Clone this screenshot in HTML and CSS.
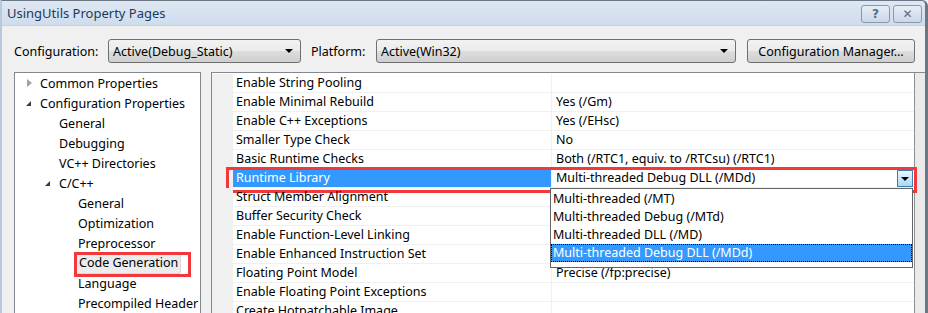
FILE: index.html
```html
<!DOCTYPE html>
<html lang="en">
<head>
  <meta charset="UTF-8" />
  <title>UsingUtils Property Pages</title>
  <link rel="stylesheet" href="styles.css">
</head>
<body>

  <div class="window">
    <div class="titlebar">
      <span class="title">UsingUtils Property Pages</span>
      <div class="caption-buttons">
        <button class="cap-btn">?</button>
        <button class="cap-btn">✕</button>
      </div>
    </div>

    <div class="toolbar">
      <label class="label label-config">Configuration:</label>
      <div class="combo combo-config">
        <span>Active(Debug_Static)</span>
        <span class="arrow"></span>
      </div>
      <label class="label label-platform">Platform:</label>
      <div class="combo combo-platform">
        <span>Active(Win32)</span>
        <span class="arrow"></span>
      </div>
      <button class="btn">Configuration Manager...</button>
    </div>

    <div class="main">
      <div class="tree">
        <div class="node lvl0"><span class="twisty closed"></span>Common Properties</div>
        <div class="node lvl0"><span class="twisty open"></span>Configuration Properties</div>
        <div class="node lvl1">General</div>
        <div class="node lvl1">Debugging</div>
        <div class="node lvl1">VC++ Directories</div>
        <div class="node lvl1"><span class="twisty open"></span>C/C++</div>
        <div class="node lvl2">General</div>
        <div class="node lvl2">Optimization</div>
        <div class="node lvl2">Preprocessor</div>
        <div class="node lvl2"><span class="current">Code Generation</span><span class="mark mark-tree"></span></div>
        <div class="node lvl2">Language</div>
        <div class="node lvl2">Precompiled Header</div>
      </div>

      <div class="grid">
        <div class="rows">
          <div class="row"><div class="gutter"></div><div class="name">Enable String Pooling</div><div class="value"></div></div>
          <div class="row"><div class="gutter"></div><div class="name">Enable Minimal Rebuild</div><div class="value">Yes (/Gm)</div></div>
          <div class="row"><div class="gutter"></div><div class="name">Enable C++ Exceptions</div><div class="value">Yes (/EHsc)</div></div>
          <div class="row"><div class="gutter"></div><div class="name">Smaller Type Check</div><div class="value">No</div></div>
          <div class="row"><div class="gutter"></div><div class="name">Basic Runtime Checks</div><div class="value">Both (/RTC1, equiv. to /RTCsu) (/RTC1)</div></div>
          <div class="row row-active">
            <div class="gutter"></div>
            <div class="name">Runtime Library</div>
            <div class="value">Multi-threaded Debug DLL (/MDd)<span class="drop-btn"></span></div>
            <span class="mark mark-row"></span>
          </div>
          <div class="row"><div class="gutter"></div><div class="name">Struct Member Alignment</div><div class="value"></div></div>
          <div class="row"><div class="gutter"></div><div class="name">Buffer Security Check</div><div class="value"></div></div>
          <div class="row"><div class="gutter"></div><div class="name">Enable Function-Level Linking</div><div class="value"></div></div>
          <div class="row"><div class="gutter"></div><div class="name">Enable Enhanced Instruction Set</div><div class="value"></div></div>
          <div class="row"><div class="gutter"></div><div class="name">Floating Point Model</div><div class="value">Precise (/fp:precise)</div></div>
          <div class="row"><div class="gutter"></div><div class="name">Enable Floating Point Exceptions</div><div class="value"></div></div>
          <div class="row"><div class="gutter"></div><div class="name">Create Hotpatchable Image</div><div class="value"></div></div>

          <ul class="droplist">
            <li>Multi-threaded (/MT)</li>
            <li>Multi-threaded Debug (/MTd)</li>
            <li>Multi-threaded DLL (/MD)</li>
            <li class="picked">Multi-threaded Debug DLL (/MDd)</li>
          </ul>
        </div>
        <div class="scrollbar"></div>
      </div>
    </div>
  </div>

</body>
</html>
```

FILE: styles.css
```css
body {
  margin: 0;
  font-family: "Noto Sans", "Open Sans", sans-serif;
  font-size: 12.5px;
  color: #000;
  background: #f0f0f0;
  overflow: hidden;
}

.window {
  width: 928px;
  height: 313px;
  box-sizing: border-box;
  border-left: 2px solid #b9c9dd;
  border-right: 3px solid #6b7785;
  border-top: 1px solid #6b7785;
  border-top-right-radius: 6px;
  background: #f0f0f0;
  overflow: hidden;
}

.titlebar {
  height: 24px;
  display: flex;
  align-items: center;
  justify-content: space-between;
  background: linear-gradient(#dfe8f4, #cfdcec);
  border-bottom: 1px solid #c3d1e2;
}

.title {
  margin-left: 5px;
  font-size: 13px;
  color: #1e395b;
}

.caption-buttons {
  display: flex;
  gap: 3px;
  margin-right: 3px;
  align-self: flex-start;
  margin-top: 4px;
}

.cap-btn {
  width: 29px;
  height: 18px;
  padding: 0;
  border: 1px solid #8b98aa;
  border-radius: 3px;
  background: linear-gradient(#e5edf7, #cbd8e8);
  color: #5a6a80;
  font-family: "DejaVu Sans", sans-serif;
  font-size: 12px;
  line-height: 14px;
  font-weight: bold;
}

.toolbar {
  display: flex;
  align-items: center;
  height: 24px;
  margin-top: 13px;
  padding-left: 12px;
}

.label {
  font-size: 12.5px;
  white-space: nowrap;
}

.label-config {
  width: 94px;
}

.label-platform {
  width: 65px;
  margin-left: 10px;
}

.combo {
  box-sizing: border-box;
  height: 24px;
  display: flex;
  align-items: center;
  justify-content: space-between;
  padding: 0 7px 0 4px;
  border: 1px solid #707070;
  border-radius: 3px;
  background: linear-gradient(#f2f2f2 0%, #ebebeb 50%, #dddddd 51%, #cfcfcf 100%);
}

.combo-config {
  width: 193px;
}

.combo-platform {
  width: 360px;
}

.arrow {
  width: 0;
  height: 0;
  border-left: 4px solid transparent;
  border-right: 4px solid transparent;
  border-top: 4px solid #000;
}

.btn {
  box-sizing: border-box;
  width: 168px;
  height: 24px;
  margin-left: 11px;
  border: 1px solid #707070;
  border-radius: 3px;
  background: linear-gradient(#f2f2f2 0%, #ebebeb 50%, #dddddd 51%, #cfcfcf 100%);
  font-family: inherit;
  font-size: 12.5px;
  padding: 0;
}

.main {
  display: flex;
  margin-top: 9px;
  padding-left: 12px;
  gap: 10px;
}

.tree {
  box-sizing: border-box;
  width: 187px;
  height: 260px;
  background: #fff;
  border: 1px solid #828790;
}

.node {
  position: relative;
  display: flex;
  align-items: center;
  height: 20px;
  white-space: nowrap;
}

.lvl0 { padding-left: 25px; }
.lvl1 { padding-left: 44px; }
.lvl2 { padding-left: 63px; }

.twisty {
  width: 0;
  height: 0;
}

.twisty.closed {
  border-top: 4px solid transparent;
  border-bottom: 4px solid transparent;
  border-left: 5px solid #a0a0a0;
  margin-left: -13px;
  margin-right: 8px;
}

.twisty.open {
  border-left: 5px solid transparent;
  border-bottom: 5px solid #3c3c3c;
  margin-left: -14px;
  margin-right: 9px;
}

.current {
  margin-left: -2px;
  padding: 1px 2px 2px 2px;
  background: #ececec;
  border: 1px solid #d9d9d9;
  border-radius: 2px;
}

.mark {
  position: absolute;
  border: 3px solid #f2383b;
  box-sizing: border-box;
  pointer-events: none;
}

.mark-tree {
  left: 59px;
  top: -1px;
  width: 117px;
  height: 25px;
}

.grid {
  box-sizing: border-box;
  flex: 1;
  height: 260px;
  display: flex;
  background: #fff;
  border: 1px solid #828790;
  border-right: none;
}

.rows {
  position: relative;
  width: 702px;
  padding-top: 1px;
}

.scrollbar {
  flex: 1;
  border-left: 1px solid #8e8f8f;
  background: #eaeaea;
}

.row {
  position: relative;
  display: flex;
  height: 19px;
}

.gutter {
  width: 21px;
  background: #f0f0f0;
}

.name {
  box-sizing: border-box;
  width: 318px;
  padding-left: 3px;
  line-height: 18px;
  border-bottom: 1px solid #f0f0f0;
  white-space: nowrap;
}

.value {
  box-sizing: border-box;
  flex: 1;
  position: relative;
  padding-left: 4px;
  line-height: 18px;
  border-left: 1px solid #f0f0f0;
  border-bottom: 1px solid #f0f0f0;
  white-space: nowrap;
}

.row-active .name {
  background: #3399ff;
  color: #fff;
}

.drop-btn {
  position: absolute;
  right: 1px;
  top: 1px;
  box-sizing: border-box;
  width: 16px;
  height: 17px;
  border: 1px solid #3c7fb1;
  background: linear-gradient(#eaf6fd, #a7d9f5);
}

.drop-btn::after {
  content: "";
  position: absolute;
  left: 3px;
  top: 6px;
  border-left: 4px solid transparent;
  border-right: 4px solid transparent;
  border-top: 4px solid #000;
}

.mark-row {
  left: 14px;
  top: -2px;
  width: 691px;
  height: 26px;
}

.droplist {
  position: absolute;
  left: 338px;
  top: 115px;
  width: 363px;
  box-sizing: border-box;
  margin: 0;
  padding: 1px 0 5px 0;
  list-style: none;
  background: #fff;
  border: 1px solid #646464;
}

.droplist li {
  height: 18px;
  line-height: 18px;
  padding-left: 2px;
  white-space: nowrap;
}

.droplist .picked {
  background: #3399ff;
  color: #fff;
  outline: 1px dotted #000;
  outline-offset: -1px;
}
```
